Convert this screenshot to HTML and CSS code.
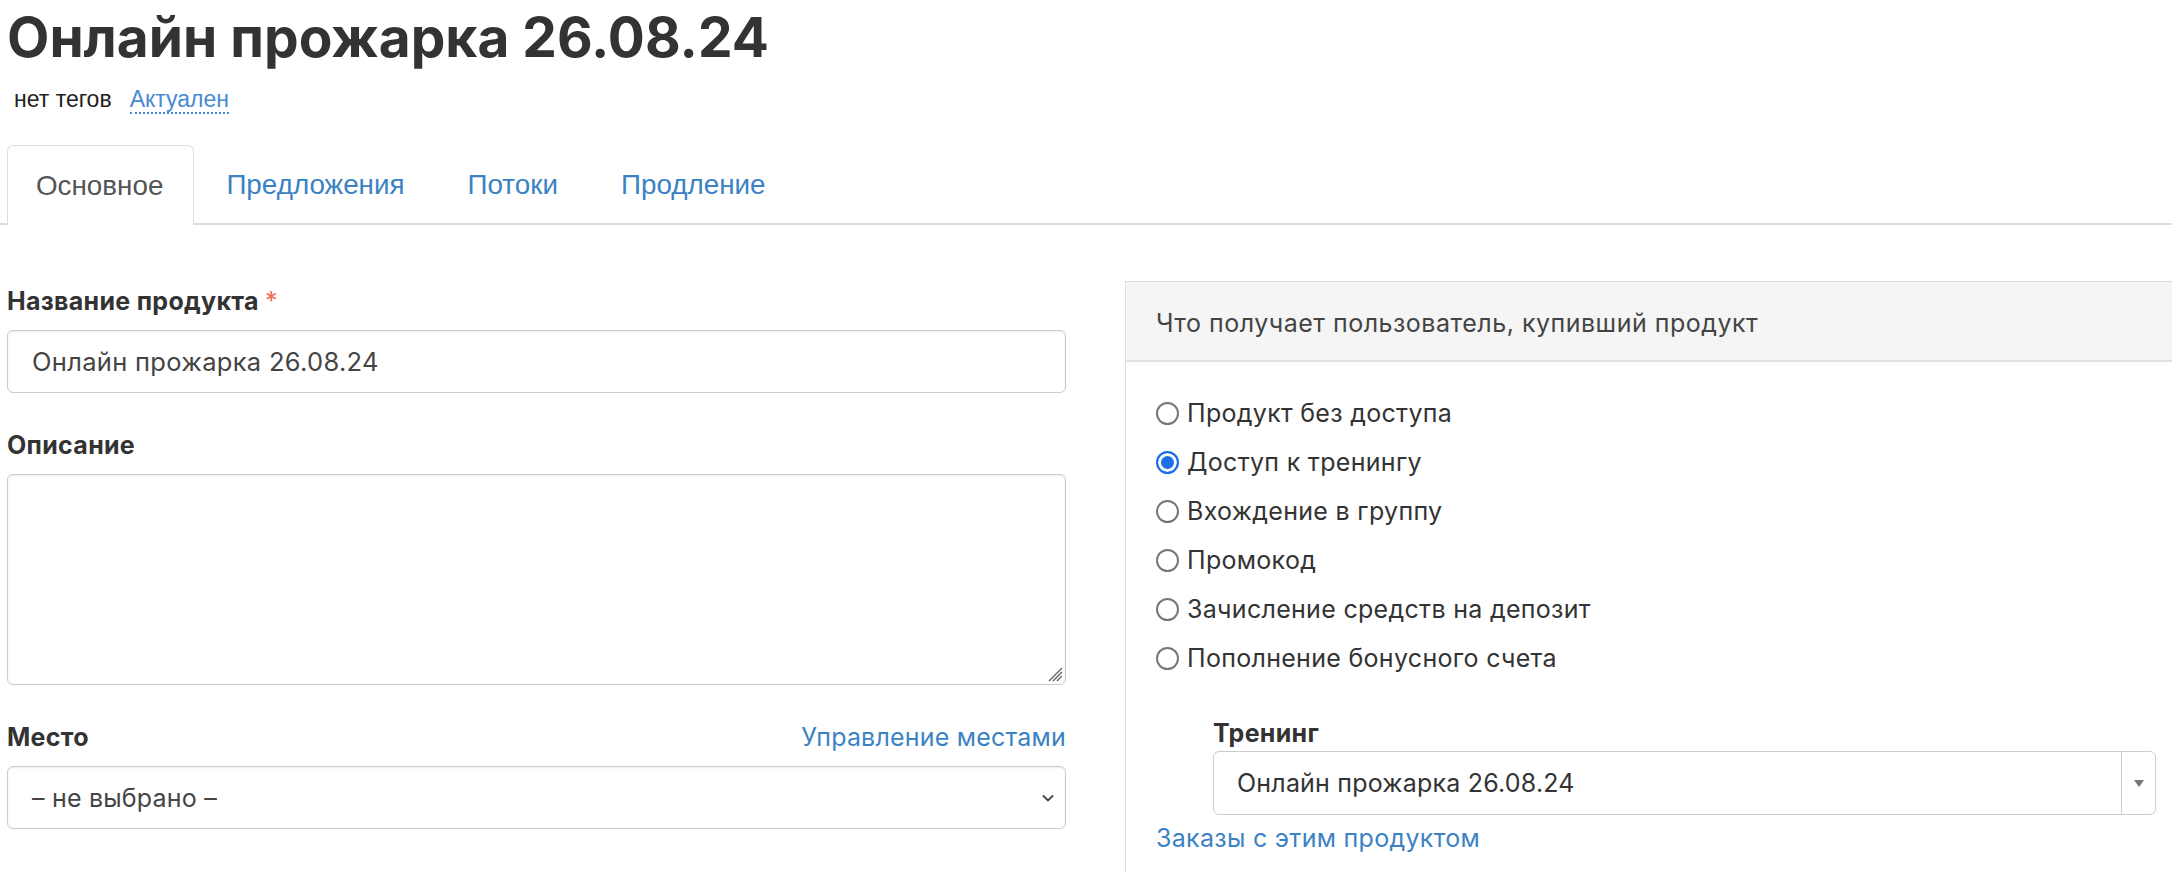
FILE: index.html
```html
<!DOCTYPE html>
<html lang="ru">
<head>
<meta charset="utf-8">
<title>Онлайн прожарка 26.08.24</title>
<link rel="stylesheet" href="styles.css">
</head>
<body>
<div class="page">
  <h1 class="title">Онлайн прожарка 26.08.24</h1>
  <div class="tags">
    <span class="tags-none">нет тегов</span>
    <a class="status" href="#">Актуален</a>
  </div>
  <nav class="tabs">
    <a class="tab active" href="#">Основное</a>
    <a class="tab" href="#">Предложения</a>
    <a class="tab" href="#">Потоки</a>
    <a class="tab" href="#">Продление</a>
  </nav>
  <div class="content">
    <div class="left">
      <div class="field">
        <label class="label">Название продукта <span class="req">*</span></label>
        <div class="input">Онлайн прожарка 26.08.24</div>
      </div>
      <div class="field">
        <label class="label">Описание</label>
        <div class="textarea">
          <svg class="grip" width="16" height="16" viewBox="0 0 16 16"><path d="M15 2 L2 15 M15 6 L6 15 M15 10 L10 15" stroke="#666" stroke-width="1.4" fill="none"/></svg>
        </div>
      </div>
      <div class="field">
        <div class="label-row">
          <label class="label">Место</label>
          <a class="link" href="#">Управление местами</a>
        </div>
        <div class="select">
          <span>– не выбрано –</span>
          <svg width="14" height="10" viewBox="0 0 14 10"><path d="M2 2.5 L7 7.5 L12 2.5" stroke="#444" stroke-width="1.8" fill="none"/></svg>
        </div>
      </div>
    </div>
    <div class="panel">
      <div class="panel-head">Что получает пользователь, купивший продукт</div>
      <div class="panel-body">
        <div class="radios">
          <label class="radio"><span class="dot"></span>Продукт без доступа</label>
          <label class="radio"><span class="dot checked"></span>Доступ к тренингу</label>
          <label class="radio"><span class="dot"></span>Вхождение в группу</label>
          <label class="radio"><span class="dot"></span>Промокод</label>
          <label class="radio"><span class="dot"></span>Зачисление средств на депозит</label>
          <label class="radio"><span class="dot"></span>Пополнение бонусного счета</label>
        </div>
        <div class="training">
          <div class="training-label">Тренинг</div>
          <div class="combo">
            <span class="combo-text">Онлайн прожарка 26.08.24</span>
            <span class="combo-btn"><span class="tri"></span></span>
          </div>
        </div>
        <a class="orders" href="#">Заказы с этим продуктом</a>
      </div>
    </div>
  </div>
</div>
</body>
</html>
```
FILE: styles.css
```css
html, body {
  margin: 0;
  padding: 0;
  background: #fff;
  overflow: hidden;
}
body {
  font-family: Inter, "Noto Sans", sans-serif;
  color: #333;
}
a { text-decoration: none; }
.page {
  width: 2200px;
  padding-left: 7px;
  box-sizing: border-box;
}
.title {
  margin: 5px 0 0 0;
  font-size: 55px;
  line-height: 64px;
  font-weight: 700;
  color: #333;
}
.tags {
  display: flex;
  align-items: baseline;
  gap: 18px;
  padding-left: 7px;
  margin-top: 16px;
  font-family: "Liberation Sans", Arial, sans-serif;
  font-size: 23px;
  line-height: 28px;
}
.tags-none { color: #222; }
.status {
  color: #4a8ad0;
  border-bottom: 2px dotted #4a8ad0;
  line-height: 26px;
}
.tabs {
  display: flex;
  margin-top: 31px;
  margin-left: -7px;
  padding-left: 7px;
  border-bottom: 2px solid #ddd;
  height: 78px;
}
.tab {
  display: flex;
  align-items: center;
  padding: 0 30px 0 28px;
  margin-right: 3px;
  font-family: "Liberation Sans", Arial, sans-serif;
  font-size: 27.8px;
  color: #3b82c4;
  border: 1px solid transparent;
  border-bottom: none;
  border-radius: 6px 6px 0 0;
}
.tab.active {
  color: #555;
  border-color: #ddd;
  background: #fff;
  margin-bottom: -2px;
  height: 80px;
  box-sizing: border-box;
}
.content {
  display: grid;
  grid-template-columns: 1059px 1fr;
  column-gap: 59px;
  margin-top: 49px;
}
.field { margin-bottom: 37px; }
.field:first-child { margin-top: 12px; }
.label {
  display: block;
  font-size: 25px;
  font-weight: 700;
  letter-spacing: 0.3px;
  line-height: 30px;
  color: #333;
  margin-bottom: 14px;
}
.req { color: #f06a5a; font-weight: 400; }
.input, .select, .textarea {
  border: 1px solid #ccc;
  border-radius: 6px;
  box-shadow: inset 0 1px 2px rgba(0,0,0,.08);
  box-sizing: border-box;
}
.input {
  height: 63px;
  display: flex;
  align-items: center;
  padding-left: 24px;
  font-size: 25.5px;
  letter-spacing: 0.3px;
  color: #444;
}
.textarea {
  height: 211px;
  position: relative;
}
.grip {
  position: absolute;
  right: 2px;
  bottom: 2px;
}
.label-row {
  display: flex;
  justify-content: space-between;
  align-items: baseline;
}
.link {
  font-size: 25px;
  letter-spacing: 0.2px;
  color: #3b82c4;
  line-height: 30px;
}
.select {
  height: 63px;
  display: flex;
  align-items: center;
  justify-content: space-between;
  padding: 0 10px 0 24px;
  font-size: 25px;
  letter-spacing: 0.2px;
  color: #444;
}
.panel {
  margin-top: 7px;
  border: 1px solid #ddd;
  border-right: none;
  height: 640px;
}
.panel-head {
  height: 80px;
  padding: 4px 0 0 30px;
  background: #f5f5f5;
  border-bottom: 2px solid #e3e3e3;
  display: flex;
  align-items: center;
  font-size: 25px;
  letter-spacing: 0.5px;
  color: #444;
  box-sizing: border-box;
}
.panel-body {
  padding: 36px 30px 0 30px;
}
.radios {
  display: flex;
  flex-direction: column;
  gap: 19px;
}
.radio {
  display: flex;
  align-items: center;
  font-size: 25px;
  letter-spacing: 0.3px;
  line-height: 30px;
  color: #333;
}
.dot {
  width: 23px;
  height: 23px;
  border: 2.5px solid #767676;
  border-radius: 50%;
  box-sizing: border-box;
  margin-right: 8px;
  flex: none;
}
.dot.checked {
  border-color: #1a6fe6;
  background: #1a6fe6;
  box-shadow: inset 0 0 0 3px #fff;
}
.training {
  margin: 45px 0 0 57px;
}
.training-label {
  font-size: 25px;
  font-weight: 700;
  letter-spacing: 0.3px;
  line-height: 30px;
  margin-bottom: 3px;
  color: #333;
}
.combo {
  display: flex;
  height: 64px;
  border: 1px solid #ccc;
  border-radius: 6px;
  box-sizing: border-box;
  width: 943px;
}
.combo-text {
  flex: 1;
  display: flex;
  align-items: center;
  padding-left: 23px;
  font-size: 25px;
  letter-spacing: 0.2px;
  color: #333;
}
.combo-btn {
  width: 33px;
  border-left: 1px solid #ccc;
  display: flex;
  align-items: center;
  justify-content: center;
}
.tri {
  width: 0;
  height: 0;
  border-left: 5px solid transparent;
  border-right: 5px solid transparent;
  border-top: 7px solid #777;
}
.orders {
  display: block;
  margin-top: 8px;
  font-size: 25px;
  letter-spacing: 0.3px;
  line-height: 30px;
  color: #3b82c4;
}
```
